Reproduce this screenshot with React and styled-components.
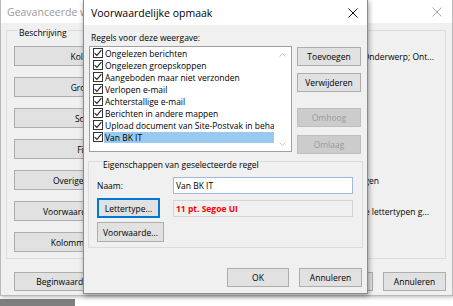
import React from 'react';
import styled, { createGlobalStyle } from 'styled-components';

const Global = createGlobalStyle`
  html, body { margin: 0; padding: 0; background: #ffffff; }
  body {
    font-family: "Open Sans", "Noto Sans", sans-serif;
    font-size: 8.5px;
    color: #000;
  }
  * { box-sizing: border-box; }
`;

const Desktop = styled.div`
  position: relative;
  width: 453px;
  height: 306px;
  overflow: hidden;
  background: #ffffff;
`;

const AppStrip = styled.div`
  position: absolute;
  left: 0;
  top: 299px;
  width: 75px;
  height: 7px;
  background: #7f7f7f;
`;

const Window = styled.div`
  position: absolute;
  left: ${(p) => p.$x}px;
  top: ${(p) => p.$y}px;
  width: ${(p) => p.$w}px;
  height: ${(p) => p.$h}px;
  display: flex;
  flex-direction: column;
  background: #f0f0f0;
  border: 1px solid ${(p) => (p.$active ? '#8c8c8c' : '#b9b9b9')};
  box-shadow: ${(p) =>
    p.$active ? '1px 2px 5px rgba(0,0,0,0.38)' : '1px 1px 4px rgba(0,0,0,0.3)'};
`;

const TitleBar = styled.div`
  flex: none;
  height: ${(p) => p.$h}px;
  background: #ffffff;
  display: flex;
  align-items: center;
  padding: 0 ${(p) => p.$pr}px 0 ${(p) => p.$pl}px;
`;

const Title = styled.div`
  flex: 1;
  min-width: 0;
  font-size: 10.5px;
  white-space: nowrap;
  overflow: hidden;
  color: ${(p) => (p.$active ? '#000000' : '#9a9a9a')};
`;

const CloseGlyph = ({ color }) => (
  <svg width="10" height="10" viewBox="0 0 10 10">
    <path d="M0.5 0.5 L9.5 9.5 M9.5 0.5 L0.5 9.5" stroke={color} strokeWidth="1" fill="none" />
  </svg>
);

/* ---------- shared controls ---------- */

const Button = styled.button`
  flex: none;
  width: ${(p) => p.$w}px;
  height: ${(p) => p.$h || 19}px;
  margin: ${(p) => p.$mt || 0}px 0 0 0;
  padding: 0;
  font-family: inherit;
  font-size: 8.5px;
  white-space: nowrap;
  overflow: visible;
  color: ${(p) => (p.disabled ? '#9b9b9b' : '#000')};
  background: ${(p) => (p.disabled ? '#cccccc' : '#e1e1e1')};
  border: 1px solid ${(p) => (p.disabled ? '#bfbfbf' : p.$default ? '#0078d7' : '#adadad')};
  box-shadow: ${(p) => (p.$default ? 'inset 0 0 0 1px #0078d7' : 'none')};
  display: flex;
  align-items: center;
  justify-content: center;
`;

const GroupBox = styled.div`
  border: 1px solid #dcdcdc;
  margin: ${(p) => p.$m};
  padding: 0 ${(p) => p.$pr}px ${(p) => p.$pb}px ${(p) => p.$pl}px;
  display: flex;
  flex-direction: column;
`;

const GroupTitle = styled.div`
  align-self: flex-start;
  margin: ${(p) => p.$mt}px 0 0 ${(p) => p.$ml}px;
  padding: 0 1px;
  line-height: 12px;
  height: 12px;
  background: #f0f0f0;
  white-space: nowrap;
`;

/* ---------- background window ---------- */

const BackBody = styled.div`
  flex: 1;
  display: flex;
  flex-direction: column;
  padding: 7px 6px 4px 5px;
`;

const SettingsGrid = styled.div`
  margin-top: 7px;
  display: grid;
  grid-template-columns: 163px minmax(0, 1fr);
  grid-auto-rows: 20px;
  row-gap: 11px;
  column-gap: 12px;
  align-items: center;
`;

const Description = styled.div`
  min-width: 0;
  overflow: hidden;
  display: flex;
  justify-content: ${(p) => (p.$inset != null ? 'flex-end' : 'flex-start')};
  padding-right: ${(p) => p.$inset || 0}px;
`;

const DescText = styled.span`
  flex: none;
  white-space: nowrap;
`;

const BackFooter = styled.div`
  margin-top: auto;
  display: flex;
  align-items: center;
  gap: 10px;
  padding: 0 0 0 8px;
`;

const Spacer = styled.div`
  flex: 1;
`;

/* ---------- front dialog ---------- */

const FrontBody = styled.div`
  flex: 1;
  display: flex;
  flex-direction: column;
  padding: 7px 5px 6px 5px;
`;

const Caption = styled.div`
  margin-left: 2px;
  line-height: 12px;
  height: 12px;
  white-space: nowrap;
`;

const RulesRow = styled.div`
  margin-top: 2px;
  display: flex;
  align-items: flex-start;
  gap: 5px;
`;

const ListBox = styled.div`
  flex: none;
  width: 203px;
  height: 106px;
  background: #ffffff;
  border: 1px solid #a0a0a0;
  display: flex;
`;

const Items = styled.div`
  flex: 1;
  min-width: 0;
  display: flex;
  flex-direction: column;
`;

const Item = styled.div`
  height: 12px;
  display: flex;
  align-items: center;
  padding-left: 3px;
`;

const CheckBox = styled.span`
  flex: none;
  width: 10px;
  height: 10px;
  border: 1px solid #333333;
  background: #ffffff;
  display: flex;
  align-items: center;
  justify-content: center;
`;

const ItemText = styled.span`
  flex: 1;
  min-width: 0;
  margin-left: 1px;
  padding-left: 1px;
  height: 11px;
  line-height: 11px;
  white-space: nowrap;
  overflow: hidden;
  background: ${(p) => (p.$selected ? '#99c9ef' : 'transparent')};
`;

const ScrollBar = styled.div`
  flex: none;
  width: 17px;
  background: #ffffff;
  display: flex;
  flex-direction: column;
  justify-content: space-between;
  align-items: center;
  padding: 6px 0 5px;
`;

const SideButtons = styled.div`
  display: flex;
  flex-direction: column;
  padding-top: 1px;
`;

const PropsGrid = styled.div`
  margin-top: 6px;
  display: grid;
  grid-template-columns: 76px 180px;
  grid-template-rows: 17px 20px 20px;
  row-gap: 4px;
  align-items: center;
`;

const FieldLabel = styled.div`
  white-space: nowrap;
`;

const TextInput = styled.div`
  height: 17px;
  background: #ffffff;
  border: 1px solid #9fb9d8;
  padding-left: 2px;
  display: flex;
  align-items: center;
  white-space: nowrap;
`;

const FontPreview = styled.div`
  height: 17px;
  background: #f0f0f0;
  border: 1px solid #d4d4d4;
  padding-left: 2px;
  display: flex;
  align-items: center;
  color: #ff0000;
  font-weight: 700;
  white-space: nowrap;
`;

const LastRow = styled.div`
  grid-column: 1 / 2;
  align-self: end;
`;

const FrontFooter = styled.div`
  margin-top: auto;
  display: flex;
  justify-content: flex-end;
  gap: 10px;
`;

const Check = () => (
  <svg width="8" height="8" viewBox="0 0 8 8">
    <path d="M0.6 4.1 L2.9 6.4 L7.4 1.2" stroke="#222" strokeWidth="1.1" fill="none" />
  </svg>
);

const Chevron = ({ up }) => (
  <svg width="7" height="4" viewBox="0 0 7 4">
    <path
      d={up ? 'M0.5 3.5 L3.5 0.6 L6.5 3.5' : 'M0.5 0.5 L3.5 3.4 L6.5 0.5'}
      stroke="#c4c4c4"
      strokeWidth="1"
      fill="none"
    />
  </svg>
);

const settings = [
  { btn: 'Kolommen...', desc: 'Belang; Pictogram; Bijlage; Van; Onderwerp; Ont...', inset: 1 },
  { btn: 'Groeperen...', desc: 'Geen' },
  { btn: 'Sorteren...', desc: 'Ontvangen (aflopend)' },
  { btn: 'Filteren...', desc: 'Uit' },
  { btn: 'Overige instellingen...', desc: 'Lettertypen en andere tabelweergave-instellingen', inset: 56 },
  { btn: 'Voorwaardelijke opmaak...', desc: 'Door gebruiker gedefinieerde opmaak voor alle lettertypen g...', inset: 6 },
  { btn: 'Kolommen opmaken...', desc: 'Kolomindelingen' },
];

const rules = [
  'Ongelezen berichten',
  'Ongelezen groepskoppen',
  'Aangeboden maar niet verzonden',
  'Verlopen e-mail',
  'Achterstallige e-mail',
  'Berichten in andere mappen',
  'Upload document van Site-Postvak in behandeling',
  'Van BK IT',
];

export default function App() {
  return (
    <Desktop>
      <Global />
      <AppStrip />

      <Window $x={0} $y={-1} $w={453} $h={297}>
        <TitleBar $h={23} $pl={6} $pr={10}>
          <Title>Geavanceerde weergave-instellingen: Compact</Title>
          <CloseGlyph color="#a8a8a8" />
        </TitleBar>
        <BackBody>
          <GroupBox $m="0" $pl={7} $pr={10} $pb={6}>
            <GroupTitle $mt={-4} $ml={4}>Beschrijving</GroupTitle>
            <SettingsGrid>
              {settings.map((s) => (
                <React.Fragment key={s.btn}>
                  <Button $w={163} $h={20}>{s.btn}</Button>
                  <Description $inset={s.inset}>
                    <DescText>{s.desc}</DescText>
                  </Description>
                </React.Fragment>
              ))}
            </SettingsGrid>
          </GroupBox>
          <BackFooter>
            <Button $w={200}>Beginwaarden van weergave herstellen</Button>
            <Spacer />
            <Button $w={63}>OK</Button>
            <Button $w={63}>Annuleren</Button>
          </BackFooter>
        </BackBody>
      </Window>

      <Window $x={83} $y={-1} $w={285} $h={295} $active>
        <TitleBar $h={25} $pl={7} $pr={9}>
          <Title $active>Voorwaardelijke opmaak</Title>
          <CloseGlyph color="#111111" />
        </TitleBar>
        <FrontBody>
          <Caption>Regels voor deze weergave:</Caption>
          <RulesRow>
            <ListBox>
              <Items>
                {rules.map((r, i) => (
                  <Item key={r}>
                    <CheckBox>
                      <Check />
                    </CheckBox>
                    <ItemText $selected={i === rules.length - 1}>{r}</ItemText>
                  </Item>
                ))}
              </Items>
              <ScrollBar>
                <Chevron up />
                <Chevron />
              </ScrollBar>
            </ListBox>
            <SideButtons>
              <Button $w={64}>Toevoegen</Button>
              <Button $w={64} $mt={7}>Verwijderen</Button>
              <Button $w={64} $mt={16} disabled>Omhoog</Button>
              <Button $w={64} $mt={8} disabled>Omlaag</Button>
            </SideButtons>
          </RulesRow>

          <GroupBox $m="7px -1px 0 -1px" $pl={8} $pr={8} $pb={5}>
            <GroupTitle $mt={-3} $ml={5}>Eigenschappen van geselecteerde regel</GroupTitle>
            <PropsGrid>
              <FieldLabel>Naam:</FieldLabel>
              <TextInput>Van BK IT</TextInput>
              <Button $w={63} $h={20} $default>Lettertype...</Button>
              <FontPreview>11 pt. Segoe UI</FontPreview>
              <LastRow>
                <Button $w={67} $h={20} $mt={7}>Voorwaarde...</Button>
              </LastRow>
            </PropsGrid>
          </GroupBox>

          <FrontFooter>
            <Button $w={62}>OK</Button>
            <Button $w={63}>Annuleren</Button>
          </FrontFooter>
        </FrontBody>
      </Window>
    </Desktop>
  );
}
